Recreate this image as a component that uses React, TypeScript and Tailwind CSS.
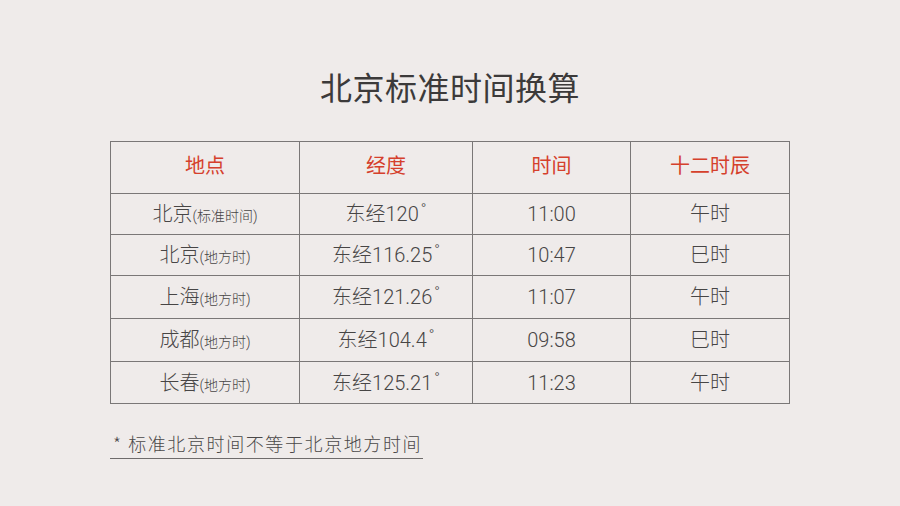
import React from "react";

const rows = [
  { city: "北京", note: "(标准时间)", lon: "120", time: "11:00", shi: "午时" },
  { city: "北京", note: "(地方时)", lon: "116.25", time: "10:47", shi: "巳时" },
  { city: "上海", note: "(地方时)", lon: "121.26", time: "11:07", shi: "午时" },
  { city: "成都", note: "(地方时)", lon: "104.4", time: "09:58", shi: "巳时" },
  { city: "长春", note: "(地方时)", lon: "125.21", time: "11:23", shi: "午时" },
];

const rowH = ["h-[41px]", "h-[41px]", "h-[43px]", "h-[43px]", "h-[42px]"];

export default function App() {
  return (
    <div
      className="w-[900px] h-[506px] bg-[#efebea] flex flex-col items-center text-[#474545] font-light"
      style={{ fontFamily: 'Roboto, "Noto Sans CJK SC", "Noto Sans", sans-serif' }}
    >
      <h1
        className="mt-[64px] h-[44px] text-[32px] leading-[44px] tracking-[0.5px] text-[#3c3a3a] font-normal"
        style={{ fontFamily: '"Noto Sans CJK SC", sans-serif' }}
      >
        北京标准时间换算
      </h1>
      <table className="mt-[33px] border-collapse border border-[#7a7777] w-[680px] table-fixed">
        <colgroup>
          <col className="w-[189px]" />
          <col className="w-[173px]" />
          <col className="w-[158px]" />
          <col className="w-[159px]" />
        </colgroup>
        <thead>
          <tr
            className="h-[52px] text-[20px] text-[#d5402c]"
            style={{ fontFamily: '"Noto Sans CJK SC", sans-serif' }}
          >
            <th className="border border-[#7a7777] font-normal pb-[5px]">地点</th>
            <th className="border border-[#7a7777] font-normal pb-[5px]">经度</th>
            <th className="border border-[#7a7777] font-normal pb-[5px]">时间</th>
            <th className="border border-[#7a7777] font-normal pb-[5px]">十二时辰</th>
          </tr>
        </thead>
        <tbody>
          {rows.map((r, i) => (
            <tr key={i} className={`${rowH[i]} text-[20px]`}>
              <td className="border border-[#7a7777] text-center p-0">
                <span>{r.city}</span>
                <span className="text-[14px]">{r.note}</span>
              </td>
              <td className="border border-[#7a7777] text-center p-0">
                东经{r.lon}
                <span className="relative top-[-7px] text-[15px] ml-[2px]">°</span>
              </td>
              <td className="border border-[#7a7777] text-center p-0">{r.time}</td>
              <td className="border border-[#7a7777] text-center p-0">{r.shi}</td>
            </tr>
          ))}
        </tbody>
      </table>
      <div className="w-[680px] mt-[26px]">
        <div
          className="inline-block text-[18px] leading-[26px] border-b border-[#6e6b6b] pb-[2px] pl-[3px] pr-[1px] tracking-[1.6px] text-[#4a4848]"
          style={{ fontFamily: '"Noto Sans CJK SC", sans-serif' }}
        >
          * 标准北京时间不等于北京地方时间
        </div>
      </div>
    </div>
  );
}
